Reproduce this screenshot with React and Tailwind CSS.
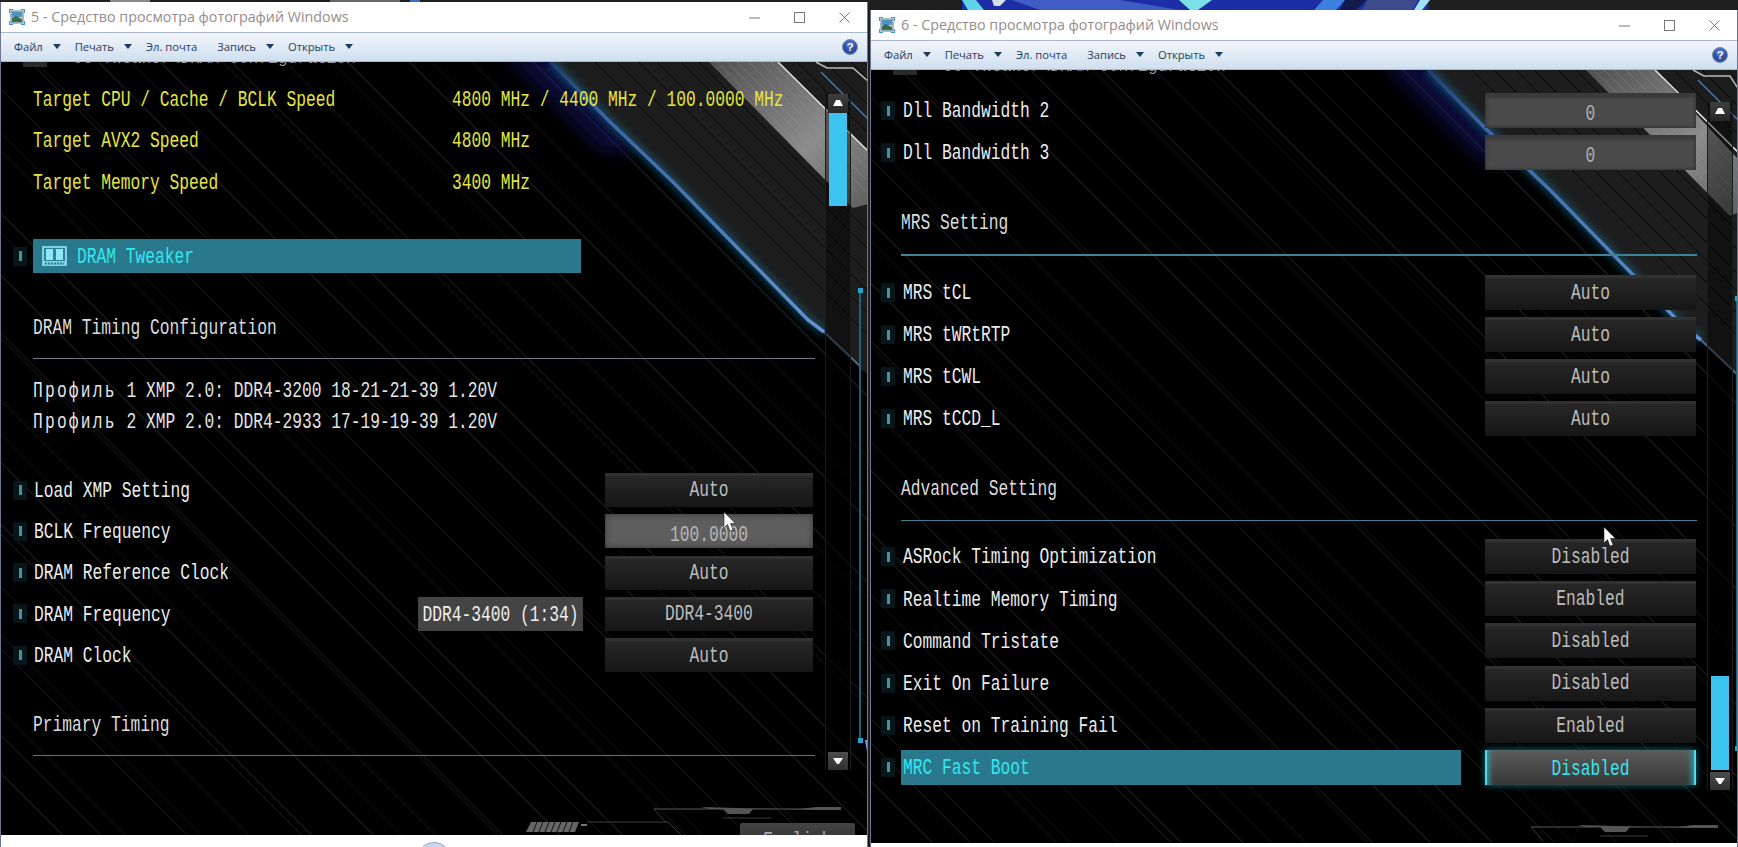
const menu = [
  { label: 'Файл', arrow: true },
  { label: 'Печать', arrow: true },
  { label: 'Эл. почта', arrow: false },
  { label: 'Запись', arrow: true },
  { label: 'Открыть', arrow: true },
];

const stripeStarts = [590, 612, 634, 652, 676, 694, 718, 740, 768, 792, 820, 846];

function Txt({ children, className = '' }) {
  return (
    <span className={`inline-block origin-center translate-y-[1px] scale-y-[1.4] whitespace-pre font-['Liberation_Mono',monospace] text-[16.25px] leading-none ${className}`}>
      {children}
    </span>
  );
}

function ViewerIcon() {
  return (
    <svg width="16" height="16" viewBox="0 0 16 16" className="shrink-0">
      <rect x="2" y="2" width="12" height="12" fill="#d6e6ee" stroke="#5a7a8c" />
      <rect x="3" y="3" width="10" height="5" fill="#4f93c4" />
      <path d="M3 13 L3 9 L7 7 L13 10 L13 13 Z" fill="#3f6b4f" />
      <path d="M0 4 V0 H4 M12 0 H16 V4 M16 12 V16 H12 M4 16 H0 V12" fill="none" stroke="#3e94d1" strokeWidth="2" />
    </svg>
  );
}

function TitleBar({ number }) {
  return (
    <div className="flex h-[30px] shrink-0 items-center bg-white pl-2 pr-[17px]">
      <ViewerIcon />
      <span className="ml-[6px] font-['Open_Sans',sans-serif] text-[14.3px] text-[#968d8a]">
        {number} - Средство просмотра фотографий Windows
      </span>
      <div className="ml-auto flex items-center gap-[34px]">
        <svg width="11" height="11" viewBox="0 0 11 11"><path d="M0 6 H11" stroke="#777" /></svg>
        <svg width="11" height="11" viewBox="0 0 11 11"><rect x="0.5" y="0.5" width="10" height="10" fill="none" stroke="#777" /></svg>
        <svg width="11" height="11" viewBox="0 0 11 11"><path d="M0.5 0.5 L10.5 10.5 M10.5 0.5 L0.5 10.5" stroke="#777" /></svg>
      </div>
    </div>
  );
}

function Toolbar() {
  return (
    <div className="flex h-[30px] shrink-0 items-center gap-[14px] border-y border-[#a8b8d0] bg-gradient-to-b from-[#f2f6fb] to-[#cfdfef] pl-[13px] pr-[9px]">
      {menu.map((item) => (
        <div key={item.label} className={`flex items-center gap-[10px] ${item.arrow ? '' : 'mr-[6px]'}`}>
          <span className="font-['Open_Sans',sans-serif] text-[11.2px] text-[#24405f]">{item.label}</span>
          {item.arrow ? (
            <svg width="8" height="5" viewBox="0 0 8 5"><path d="M0 0 H8 L4 5 Z" fill="#1f3a5c" /></svg>
          ) : null}
        </div>
      ))}
      <svg width="16" height="16" viewBox="0 0 16 16" className="ml-auto">
        <circle cx="8" cy="8" r="7.5" fill="#2c4fa3" stroke="#7d8ba8" />
        <circle cx="8" cy="5" r="5" fill="#6a8be0" opacity="0.45" />
        <text x="8" y="12" textAnchor="middle" fontSize="11" fontWeight="700" fontFamily="Liberation Sans, sans-serif" fill="#fff">?</text>
      </svg>
    </div>
  );
}

// the slanted plate and the blue edge at the top right of the UEFI wallpaper
function WallpaperArt({ dx = 0, baseY = 745, showBlock = false, idSuffix }) {
  const edge = `M${550 + dx} 0 L${607 + dx} 58 L${673 + dx} 121 L${807 + dx} 258 L${823 + dx} 270`;
  return (
    <svg width="868" height="773" viewBox="0 0 868 773" className="absolute inset-0">
      <defs>
        <clipPath id={`plate-${idSuffix}`}>
          <path d={`M${552 + dx} 0 L${609 + dx} 58 L${675 + dx} 121 L${809 + dx} 258 L${860 + dx} 307 L868 313 L868 0 Z`} />
        </clipPath>
        <filter id={`blur-${idSuffix}`} x="-30%" y="-30%" width="160%" height="160%">
          <feGaussianBlur stdDeviation="8" />
        </filter>
        <filter id={`glow-${idSuffix}`} x="-30%" y="-30%" width="160%" height="160%">
          <feGaussianBlur stdDeviation="4" />
        </filter>
        <linearGradient id={`band-${idSuffix}`} x1="0" y1="0" x2="1" y2="1">
          <stop offset="0" stopColor="#505050" />
          <stop offset="0.6" stopColor="#8c8c8c" />
          <stop offset="1" stopColor="#5e5e5e" />
        </linearGradient>
        <linearGradient id={`edge-${idSuffix}`} x1="0" y1="0" x2="1" y2="1">
          <stop offset="0" stopColor="#1d3c70" />
          <stop offset="0.2" stopColor="#3a66a4" />
          <stop offset="0.6" stopColor="#4a7cba" />
          <stop offset="1" stopColor="#6394d0" />
        </linearGradient>
      </defs>
      <path d={`M${500 + dx} -10 L${552 + dx} -10 L${640 + dx} 90 L${600 + dx} 90 Z`} fill="#14146a" opacity="0.5" filter={`url(#blur-${idSuffix})`} />
      <g clipPath={`url(#plate-${idSuffix})`}>
        <rect x="540" y="0" width="328" height="320" fill="#1d1d1d" />
        {stripeStarts.map((x) => (
          <path key={x} d={`M${x + dx} -4 L${x + dx + 340} 336`} stroke="#060606" strokeWidth="1" />
        ))}
        <path d={`M${708 + dx} 0 L${777 + dx} 0 L868 90 L868 142 L${852 + dx} 146 Z`} fill={`url(#band-${idSuffix})`} />
        {[716, 726, 736, 748, 760, 770].map((x) => (
          <path key={x} d={`M${x + dx} 0 L${x + dx + 130} 130`} stroke="#a0a0a0" strokeWidth="1" opacity="0.3" />
        ))}
        <path d={`M${777 + dx} 0 L${868 + dx} 90`} stroke="#e4e4e4" strokeWidth="1.5" />
        <path d={`M${815 + dx} 0 L${826 + dx} 6 L${852 + dx} 6 L868 20`} fill="none" stroke="#b8b8b8" strokeWidth="1.5" />
        <path d={`M${820 + dx} 10 L868 ${58 - dx}`} stroke="#4a78b0" strokeWidth="1.5" />
      </g>
      <path d={edge} fill="none" stroke="#1f7aa8" strokeWidth="7" opacity="0.6" filter={`url(#glow-${idSuffix})`} />
      <path d={edge} fill="none" stroke={`url(#edge-${idSuffix})`} strokeWidth="3.5" />
      <path d={`M${823 + dx} 270 L${860 + dx} 305`} stroke="#5f86ac" strokeWidth="2" opacity="0.7" />
      <path d={`M${859 + dx} 226 V678`} stroke="#21607a" strokeWidth="2" />
      <path d={`M${865 + dx} 678 L868 695`} stroke="#79a8d8" strokeWidth="2" />
      <rect x={857 + dx} y="226" width="5" height="5" fill="#2a9fd0" />
      <rect x={857 + dx} y="676" width="5" height="5" fill="#2a9fd0" />

      <path d={`M${653 + dx} ${baseY + 2} H${840 + dx}`} stroke="#3c3c3c" strokeWidth="1.5" />
      <path d={`M${700 + dx} ${baseY} L${708 + dx} ${baseY + 2} H${722 + dx} L${727 + dx} ${baseY + 7} H${748 + dx} L${752 + dx} ${baseY + 2} H${800 + dx} L${815 + dx} ${baseY} H${840 + dx} V${baseY + 3} H${815 + dx} Z`} fill="#555" />
      <path d={`M${722 + dx} ${baseY + 11} H${770 + dx}`} stroke="#3a3a3a" />
      <path d={`M${653 + dx} ${baseY + 2} L${665 + dx} ${baseY + 16}`} stroke="#3c3c3c" />
      {showBlock ? (
        <g>
          <path d="M530 760 H578 L574 770 H525 Z" fill="#666" />
          {[536, 542, 548, 554, 560, 566, 572].map((x) => (
            <path key={x} d={`M${x} 760 L${x - 4} 770`} stroke="#111" />
          ))}
          <path d="M580 763 H586" stroke="#777" strokeWidth="2" />
          <path d="M586 760 H667 L680 773" fill="none" stroke="#3c3c3c" />
        </g>
      ) : null}
    </svg>
  );
}

function Indicator() {
  return (
    <span className="flex h-[19px] w-[14px] shrink-0 items-center justify-center bg-[#061619]">
      <span className="h-[10px] w-[3px] bg-[#4b8fa2]" />
    </span>
  );
}

function ValueButton({ value, tone = 'dark', wide = false }) {
  const toneClass = {
    dark: 'border-t-[3px] border-[#313131] bg-gradient-to-b from-[#272727] to-[#161616] pb-[4px] text-[#bdbdbd]',
    flat: 'border-t-[3px] border-[#3a3a3a] bg-[#4a4a4a] pt-[2px] text-[#b0b0b0] shadow-[inset_0_0_4px_#2a2a2a]',
    bright: 'bg-[#5e5e5e] pt-[6px] text-[#b8b8b8] shadow-[inset_0_0_6px_#333]',
    active: 'border-x-2 border-[#55d8ea] bg-gradient-to-b from-[#5c5c5c] to-[#363636] pt-[2px] text-[#38e6ee] shadow-[0_0_7px_#17727f,inset_7px_0_6px_-5px_#2aa4b4,inset_-7px_0_6px_-5px_#2aa4b4]',
  }[tone];
  return (
    <div className={`flex h-full shrink-0 items-center justify-center ${wide ? 'mr-[1px] w-[211px]' : 'mr-[2px] w-[208px]'} ${toneClass}`}>
      <Txt>{value}</Txt>
    </div>
  );
}

function Row({ label, value, tone, wide = false, hint, active = false }) {
  return (
    <div className={`flex items-center ${wide ? 'h-[35px] gap-[8px]' : 'h-[34px] gap-[7px]'}`}>
      <Indicator />
      {active ? (
        <div className="-ml-[2px] flex h-full w-[560px] items-center bg-[#2a788c] pl-[2px]">
          <Txt className="text-[#35e6f0]">{label}</Txt>
        </div>
      ) : (
        <Txt className="text-[#ececec]">{label}</Txt>
      )}
      <div className="ml-auto flex h-full items-center">
        {hint ? (
          <div className="mr-[22px] flex h-full w-[165px] items-center justify-center bg-[#444]">
            <Txt className="text-[#eee]">{hint}</Txt>
          </div>
        ) : null}
        <ValueButton value={value} tone={tone} wide={wide} />
      </div>
    </div>
  );
}

function TargetRow({ label, value }) {
  return (
    <div className="flex h-[41.5px] items-center pl-[20px] text-[#e6e63e]">
      <Txt className="w-[419px]">{label}</Txt>
      <Txt>{value}</Txt>
    </div>
  );
}

function Heading({ children }) {
  return (
    <div className="flex h-[30px] items-center">
      <Txt className="text-[#dcdcdc]">{children}</Txt>
    </div>
  );
}

function ProfileLine({ rest }) {
  return (
    <div className="flex h-[31px] items-center">
      <Txt className="text-[#e4e4e4]">
        <span className="tracking-[2.2px]">Профиль</span> {rest}
      </Txt>
    </div>
  );
}

function Scrollbar({ height, thumbTop, thumbHeight }) {
  return (
    <div className={`relative ml-[10px] mt-[32px] flex w-[26px] shrink-0 flex-col items-center border-x border-[#1b1b1b] bg-black/40 ${height}`}>
      <div className="flex h-[19px] w-[20px] shrink-0 items-center justify-center bg-gradient-to-b from-[#3e3e3e] to-[#262626]">
        <svg width="10" height="7" viewBox="0 0 10 7"><path d="M3 0 H7 L10 6 H0 Z" fill="#fff" /></svg>
      </div>
      <div className={`w-[18px] shrink-0 bg-[#3cc4f0] ${thumbTop} ${thumbHeight}`} />
      <div className="mt-auto flex h-[18px] w-[20px] shrink-0 items-center justify-center bg-gradient-to-b from-[#4c4c4c] to-[#303030]">
        <svg width="10" height="7" viewBox="0 0 10 7"><path d="M0 0 H10 L6 6 H4 Z" fill="#fff" /></svg>
      </div>
    </div>
  );
}

function Cursor({ className }) {
  return (
    <svg width="13" height="20" viewBox="0 0 13 20" className={`absolute z-20 ${className}`}>
      <path d="M1 0 V16 L4.5 12.5 L7 19 L10 18 L7.5 11.5 L12.5 11.5 Z" fill="#fff" stroke="#222" strokeWidth="0.6" />
    </svg>
  );
}

function Window({ number, className, children }) {
  return (
    <div className={`flex w-[868px] shrink-0 flex-col border-x border-[#6d7592] bg-white ${className}`}>
      <TitleBar number={number} />
      <Toolbar />
      <div className="relative flex h-[773px] shrink-0 overflow-hidden bg-black bg-[repeating-linear-gradient(45deg,transparent_0,transparent_43px,#161616_43px,#161616_44px),repeating-linear-gradient(45deg,transparent_0,transparent_70px,#121212_70px,#121212_71px)]">
        {children}
      </div>
      <div className="flex min-h-0 flex-1 justify-center overflow-hidden bg-white">
        <span className="mt-[7px] h-[34px] w-[34px] shrink-0 rounded-full border border-[#9aa6c0] bg-[#c9d6f0]" />
      </div>
    </div>
  );
}

// the page header, scrolled almost entirely under the toolbar
function ClippedPath() {
  return (
    <div className="absolute left-[22px] top-0 z-10 flex h-[5px] items-start overflow-hidden">
      <span className="h-[5px] w-[24px] bg-[#2a2a2a]" />
      <span className="-mt-[15px] ml-[26px] whitespace-pre font-['Liberation_Mono',monospace] text-[16.25px] text-[#9a9a9a]">
        OC Tweaker\DRAM Configuration
      </span>
    </div>
  );
}

function LeftPanel() {
  return (
    <>
      <WallpaperArt idSuffix="a" showBlock />
      <ClippedPath />
      <div className="relative z-10 flex w-[814px] shrink-0 flex-col pl-[12px] pt-[16px]">
        <TargetRow label="Target CPU / Cache / BCLK Speed" value="4800 MHz / 4400 MHz / 100.0000 MHz" />
        <TargetRow label="Target AVX2 Speed" value="4800 MHz" />
        <TargetRow label="Target Memory Speed" value="3400 MHz" />

        <div className="mt-[36.5px] flex h-[34px] items-center gap-[6px]">
          <Indicator />
          <div className="flex h-full w-[548px] items-center bg-[#2a788c] pl-[9px]">
            <svg width="25" height="20" viewBox="0 0 25 20" className="mr-[10px]">
              <rect width="25" height="20" fill="#7fd2e4" />
              <rect x="2" y="2" width="21" height="13" fill="#2f8196" />
              <rect x="4" y="3" width="7" height="11" fill="#8fe6f4" />
              <rect x="14" y="3" width="7" height="11" fill="#8fe6f4" />
              <path d="M3 17.5 H22" stroke="#2f8196" strokeWidth="2" strokeDasharray="2 1" />
            </svg>
            <Txt className="text-[#35e6f0]">DRAM Tweaker</Txt>
          </div>
        </div>

        <div className="ml-[20px] mt-[39px]">
          <Heading>DRAM Timing Configuration</Heading>
          <div className="mt-[16px] h-px w-[782px] bg-[#6d7f86]" />
          <div className="mt-[15.5px]">
            <ProfileLine rest="1 XMP 2.0: DDR4-3200 18-21-21-39 1.20V" />
            <ProfileLine rest="2 XMP 2.0: DDR4-2933 17-19-19-39 1.20V" />
          </div>
        </div>

        <div className="mt-[36.5px] flex flex-col gap-[7.3px]">
          <Row label="Load XMP Setting" value="Auto" />
          <Row label="BCLK Frequency" value="100.0000" tone="bright" />
          <Row label="DRAM Reference Clock" value="Auto" />
          <Row label="DRAM Frequency" value="DDR4-3400" hint="DDR4-3400 (1:34)" />
          <Row label="DRAM Clock" value="Auto" />
        </div>

        <div className="ml-[20px] mt-[36.8px]">
          <Heading>Primary Timing</Heading>
          <div className="mt-[16px] h-px w-[782px] bg-[#3f8297]" />
        </div>
      </div>
      <div className="relative z-10 flex items-start">
        <Scrollbar height="h-[676px]" thumbTop="mt-0" thumbHeight="h-[93px]" />
      </div>
      <div className="absolute left-[739px] top-[761px] z-10 flex h-[30px] w-[115px] justify-center rounded-t-[2px] bg-gradient-to-b from-[#444] to-[#2a2a2a] pt-[9px]">
        <Txt className="h-[16px] text-[#aaa]">English</Txt>
      </div>
      <Cursor className="left-[722px] top-[450px]" />
    </>
  );
}

function RightPanel() {
  return (
    <>
      <WallpaperArt idSuffix="b" dx={7} baseY={755} />
      <ClippedPath />
      <div className="relative z-10 flex w-[826px] shrink-0 flex-col pl-[10px] pt-[23px]">
        <div className="flex flex-col gap-[7px]">
          <Row wide label="Dll Bandwidth 2" value="0" tone="flat" />
          <Row wide label="Dll Bandwidth 3" value="0" tone="flat" />
        </div>

        <div className="ml-[20px] mt-[37px]">
          <Heading>MRS Setting</Heading>
          <div className="mt-[17px] h-[2px] w-[796px] bg-[#3f8297]" />
        </div>

        <div className="mt-[19px] flex flex-col gap-[7px]">
          <Row wide label="MRS tCL" value="Auto" />
          <Row wide label="MRS tWRtRTP" value="Auto" />
          <Row wide label="MRS tCWL" value="Auto" />
          <Row wide label="MRS tCCD_L" value="Auto" />
        </div>

        <div className="ml-[20px] mt-[37px]">
          <Heading>Advanced Setting</Heading>
          <div className="mt-[17px] h-px w-[796px] bg-[#3f8297]" />
        </div>

        <div className="mt-[18px] flex flex-col gap-[7.2px]">
          <Row wide label="ASRock Timing Optimization" value="Disabled" />
          <Row wide label="Realtime Memory Timing" value="Enabled" />
          <Row wide label="Command Tristate" value="Disabled" />
          <Row wide label="Exit On Failure" value="Disabled" />
          <Row wide label="Reset on Training Fail" value="Enabled" />
          <Row wide active label="MRC Fast Boot" value="Disabled" tone="active" />
        </div>
      </div>
      <div className="relative z-10 flex items-start">
        <Scrollbar height="h-[688px]" thumbTop="mt-[555px]" thumbHeight="h-[94px]" />
      </div>
      <Cursor className="left-[732px] top-[457px]" />
    </>
  );
}

export default function App() {
  return (
    <div className="relative flex h-[847px] w-[1738px] gap-[2px] overflow-hidden bg-[#1f1f1f]">
      <svg width="1738" height="10" viewBox="0 0 1738 10" className="absolute left-0 top-0">
        <rect x="962" width="466" height="10" fill="#1b2ea6" />
        <path d="M962 0 H976 L984 10 H968 Z" fill="#5fd4e4" />
        <path d="M992 0 H1006 L1000 6 H994 Z" fill="#d8dde8" />
        <path d="M1012 0 H1120 L1180 10 H1040 Z" fill="#3f5cc4" />
        <path d="M1179 0 H1212 L1198 10 H1190 Z" fill="#7adfe8" />
        <path d="M1323 0 H1345 L1336 10 H1314 Z" fill="#3f7fe0" />
        <path d="M1345 0 H1367 L1356 10 H1340 Z" fill="#111a4a" />
        <path d="M1367 0 H1418 L1412 10 H1362 Z" fill="#3c4a8c" />
        <path d="M1420 0 H1430 L1422 10 H1414 Z" fill="#9fe4ee" />
        <rect x="110" width="40" height="2" fill="#888" />
        <rect x="330" width="70" height="2" fill="#666" />
        <rect x="410" width="10" height="2" fill="#3a6fd0" />
      </svg>
      <Window number="5" className="relative mt-[2px]">
        <LeftPanel />
      </Window>
      <Window number="6" className="relative mt-[10px]">
        <RightPanel />
      </Window>
    </div>
  );
}
